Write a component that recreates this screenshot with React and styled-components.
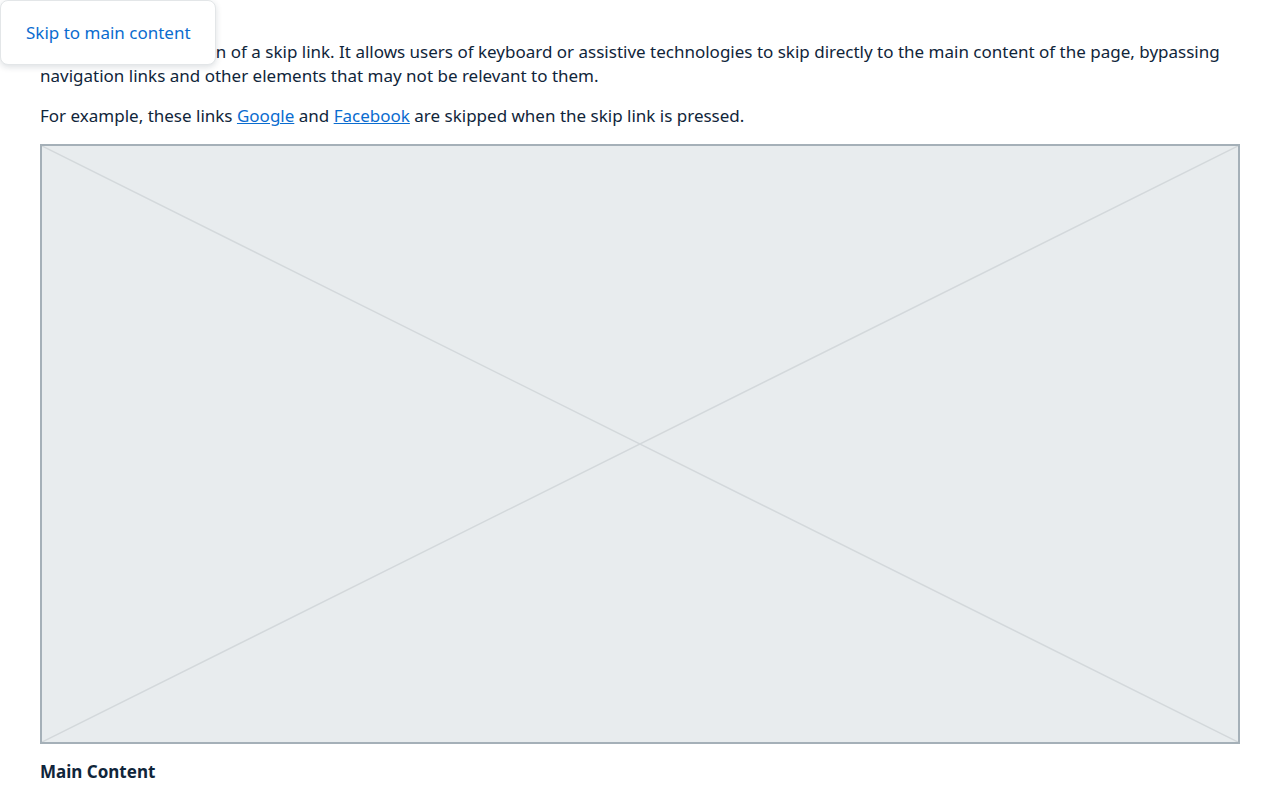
import styled, { createGlobalStyle } from "styled-components";

const GlobalStyle = createGlobalStyle`
    body {
        margin: 0;
        background: #fff;
        font-family: "Noto Sans", "Open Sans", sans-serif;
        color: #10253a;
    }
`;

const Page = styled.main`
    padding: 40px 40px 0;
    position: relative;
    font-size: 17px;
    line-height: 24px;
`;

const SkipLink = styled.a`
    position: absolute;
    top: 0;
    left: 0;
    width: 216px;
    height: 65px;
    box-sizing: border-box;
    display: flex;
    align-items: center;
    padding-left: 25px;
    background: #fff;
    border: 1px solid #e3e6e8;
    border-radius: 8px;
    box-shadow: 0 2px 6px rgba(19, 39, 58, 0.15);
    color: #0a6ccf;
    text-decoration: none;
    font-size: 17px;
`;

const Paragraph = styled.p`
    margin: 0 0 16px;
`;

const TextLink = styled.a`
    color: #0a6ccf;
    text-decoration: underline;
`;

const Placeholder = styled.div`
    box-sizing: border-box;
    width: 100%;
    height: 600px;
    border: 2px solid #a5b0b8;
    background: #e8ecee;
`;

const Lines = styled.svg`
    display: block;
    width: 100%;
    height: 100%;
`;

const Caption = styled.p`
    margin: 16px 0 0;
    font-weight: 700;
`;

export default function App() {
    return (
        <>
            <GlobalStyle />
            <Page>
                <SkipLink href="#main">Skip to main content</SkipLink>
                <Paragraph>
                    This is a demonstration of a skip link. It allows users of keyboard or assistive technologies to skip
                    directly to the main content of the page, bypassing navigation links and other elements that may not be
                    relevant to them.
                </Paragraph>
                <Paragraph>
                    For example, these links <TextLink href="#">Google</TextLink> and{" "}
                    <TextLink href="#">Facebook</TextLink> are skipped when the skip link is pressed.
                </Paragraph>
                <Placeholder>
                    <Lines viewBox="0 0 100 50" preserveAspectRatio="none">
                        <line x1="0" y1="0" x2="100" y2="50" stroke="#d3d8db" strokeWidth="1.5" vectorEffect="non-scaling-stroke" />
                        <line x1="100" y1="0" x2="0" y2="50" stroke="#d3d8db" strokeWidth="1.5" vectorEffect="non-scaling-stroke" />
                    </Lines>
                </Placeholder>
                <Caption id="main">Main Content</Caption>
            </Page>
        </>
    );
}
